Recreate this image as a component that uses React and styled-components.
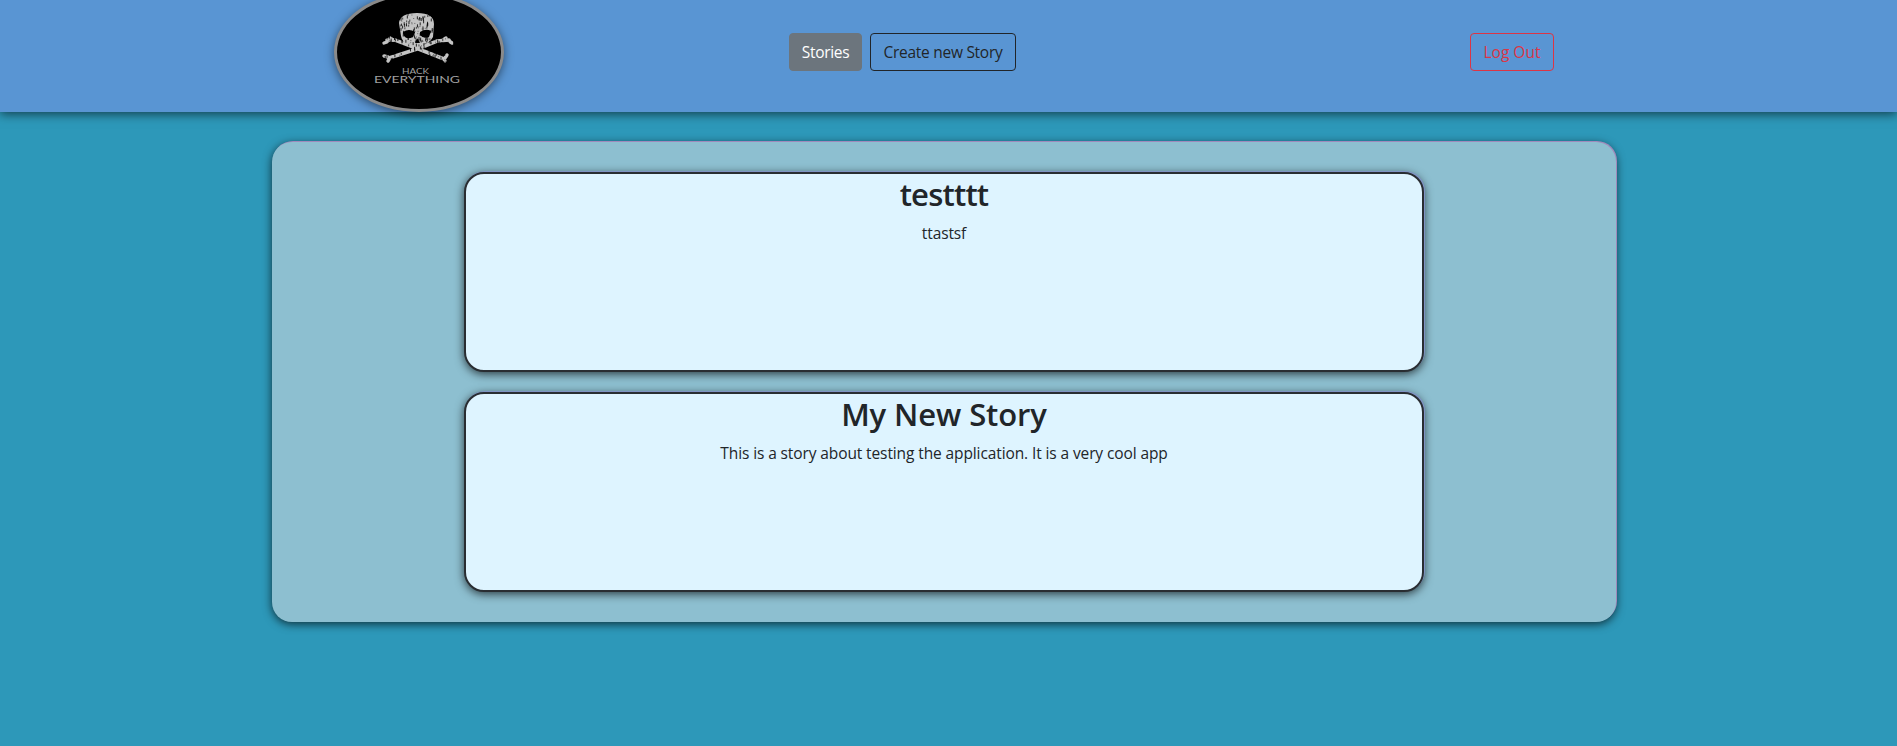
import React from "react";
import styled, { createGlobalStyle } from "styled-components";

const GlobalStyle = createGlobalStyle`
  *, *::before, *::after { box-sizing: border-box; }
  body {
    margin: 0;
    min-height: 100vh;
    background: #2d98b9;
    color: #212529;
    font: 400 16px/1.5 "Open Sans", "Noto Sans", sans-serif;
  }
`;

const Navbar = styled.nav`
  display: flex;
  align-items: center;
  height: 112px;
  padding: 0 343px 8px 334px;
  background: #5995d3;
  box-shadow: 0 2px 10px rgba(0, 0, 0, 0.6);
`;

const Logo = styled.div`
  flex: none;
  width: 170px;
  height: 120px;
  border: 3px solid #8a8a8a;
  border-radius: 50%;
  overflow: hidden;
  background: #000;
  box-shadow: 0 2px 10px rgba(0, 0, 0, 0.5);
`;

const Links = styled.div`
  display: flex;
  gap: 8px;
  margin: 0 auto 0 285px;
`;

const tones = {
  solid: ["#fff", "#6c757d", "#6c757d"],
  dark: ["#212529", "#212529", "transparent"],
  danger: ["#dc3545", "#dc3545", "transparent"],
};

const Button = styled.button`
  width: ${(p) => p.$width}px;
  height: 38px;
  padding: 2px 0 0;
  border: 1px solid ${(p) => tones[p.$tone][1]};
  border-radius: 4px;
  background: ${(p) => tones[p.$tone][2]};
  color: ${(p) => tones[p.$tone][0]};
  font: inherit;
  font-size: 15.5px;
  letter-spacing: ${(p) => p.$spacing || 0}px;
  white-space: nowrap;
`;

const Panel = styled.main`
  display: flex;
  flex-direction: column;
  align-items: center;
  gap: 20px;
  width: 1344px;
  height: 480px;
  margin: 30px 0 0 272px;
  padding: 30px 0;
  border-radius: 20px;
  background: #8dbfd0;
  box-shadow: 1px -1px 0 #a08abb, 0 2px 10px rgba(0, 0, 0, 0.7);
`;

const Card = styled.article`
  width: 960px;
  height: 200px;
  padding-top: 1px;
  border: 2px solid #292d32;
  border-radius: 20px;
  background: #def4ff;
  text-align: center;
  box-shadow: 1px -1px 0 #7f93c4, 0 2px 10px rgba(0, 0, 0, 0.7);
`;

const Title = styled.h2`
  margin: 0 0 8px;
  font-size: 31px;
  font-weight: 600;
  line-height: 38.4px;
  letter-spacing: ${(p) => p.$spacing || 0}px;
`;

const Text = styled.p`
  margin: 0;
  font-size: 15.5px;
  line-height: 24px;
  letter-spacing: -0.11px;
`;

const stories = [
  { title: "testttt", text: "ttastsf", spacing: -0.8 },
  {
    title: "My New Story",
    text: "This is a story about testing the application. It is a very cool app",
    spacing: -0.1,
  },
];

const specks = Array.from({ length: 360 }, (_, i) => {
  const a = Math.abs(Math.sin(i * 12.9898) * 43758.5453) % 1;
  const b = Math.abs(Math.sin(i * 78.233) * 12543.123) % 1;
  return [44 + a * 74, 17 + b * 52, i % 3];
});

function SkullLogo() {
  return (
    <svg width="164" height="114" viewBox="0 0 164 114" role="img" aria-label="Hack everything">
      <g fill="none" stroke="#c4c4c4" strokeLinecap="round">
        <path d="M50 45L58 45L79 53L107 64 M112 45L100 46L83 53L52 63" strokeWidth="3.6" />
        <path d="M47 48l3-1M53 43l3 2M115 48l-3-2M109 43l-3 2M47 61l4 1M51 66l2-3M110 60l-2 3M108 66l-1-2" strokeWidth="3.4" />
      </g>
      <path
        fill="#c4c4c4"
        d="M62 28Q63 18 80 18Q97 18 97 29L96 42Q92 49 87 49L86 54H75L74 49Q65 49 64 41Z"
      />
      <path fill="#000" d="M66 37Q72 33 78 37L76 42Q70 45 67 41ZM83 37Q89 33 94 36L92 42Q86 44 83 40ZM80 43l3 5h-5Z" />
      <g stroke="#000" strokeWidth="1">
        {specks.map(([x, y, k], i) => (
          <path key={i} d={`M${x} ${y}v${k + 1}`} opacity={0.5 + k * 0.15} />
        ))}
      </g>
      <g fill="#a0a0a0" fontFamily="Lato, sans-serif">
        <text x="65" y="79" fontSize="8.2" textLength="27" lengthAdjust="spacingAndGlyphs">HACK</text>
        <text x="37" y="87.7" fontSize="9.6" textLength="86" lengthAdjust="spacingAndGlyphs">EVERYTHING</text>
      </g>
    </svg>
  );
}

export default function App() {
  return (
    <>
      <GlobalStyle />
      <Navbar>
        <Logo><SkullLogo /></Logo>
        <Links>
          <Button $tone="solid" $width={73} $spacing={-0.3}>Stories</Button>
          <Button $tone="dark" $width={146} $spacing={-0.28}>Create new Story</Button>
        </Links>
        <Button $tone="danger" $width={84}>Log Out</Button>
      </Navbar>
      <Panel>
        {stories.map((s) => (
          <Card key={s.title}>
            <Title $spacing={s.spacing}>{s.title}</Title>
            <Text>{s.text}</Text>
          </Card>
        ))}
      </Panel>
    </>
  );
}
